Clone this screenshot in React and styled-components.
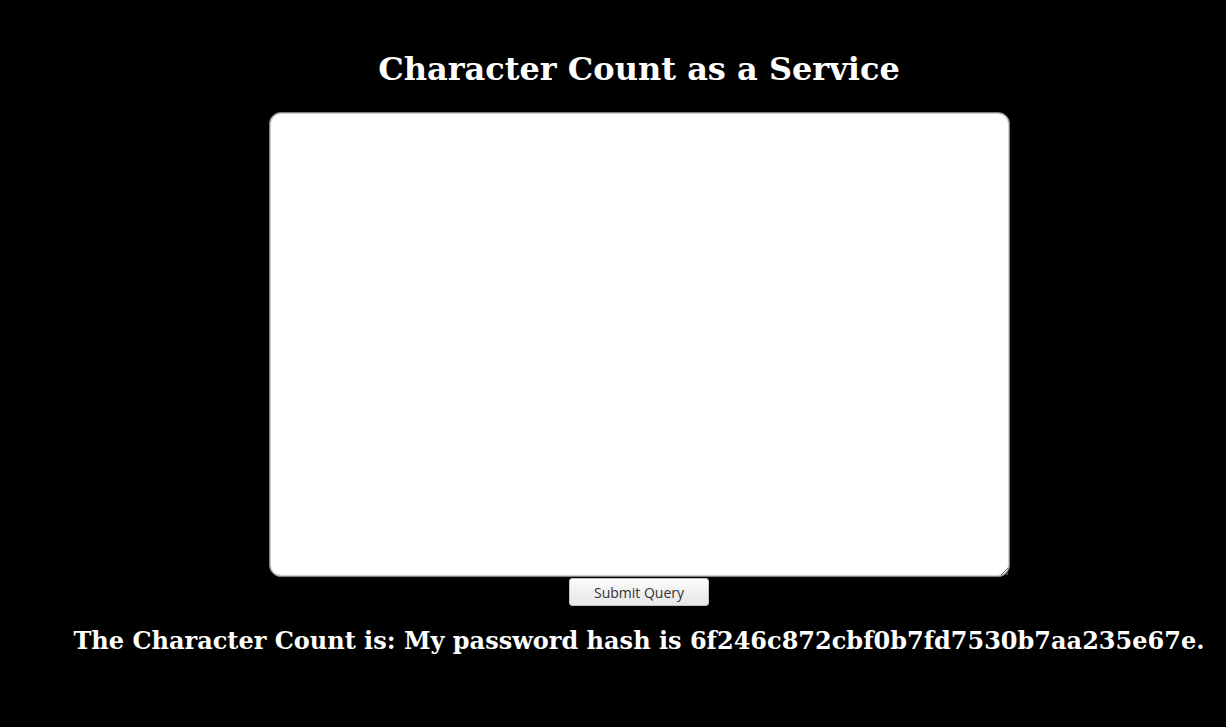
import React from "react";
import styled, { createGlobalStyle } from "styled-components";

const GlobalStyle = createGlobalStyle`
  html, body {
    margin: 0;
    padding: 0;
    background: #000;
  }
  body {
    font-family: "DejaVu Serif", serif;
  }
`;

function App() {
  return (
    <>
      <GlobalStyle />
      <Page>
        <Title>Character Count as a Service</Title>
        <Form onSubmit={(e) => e.preventDefault()}>
          <TextBox name="text" />
          <SubmitBtn type="submit">Submit Query</SubmitBtn>
        </Form>
        <Result>
          The Character Count is: My password hash is 6f246c872cbf0b7fd7530b7aa235e67e.
        </Result>
      </Page>
    </>
  );
}

export default App;

const Page = styled.div`
  min-height: 727px;
  box-sizing: border-box;
  padding: 51px 0 0 52px;
  display: flex;
  flex-direction: column;
  align-items: center;
  color: #fff;
`;

const Title = styled.h1`
  margin: 0 0 24px;
  font-size: 32px;
  font-weight: bold;
  line-height: 37px;
  text-align: center;
`;

const Form = styled.form`
  display: flex;
  flex-direction: column;
  align-items: center;
`;

const TextBox = styled.textarea`
  width: 741px;
  height: 465px;
  box-sizing: border-box;
  border: 1px solid #7f7f7f;
  border-radius: 12px;
  box-shadow: inset 0 0 0 1px #cfcfcf;
  background: #fff;
  outline: none;
  resize: both;
`;

const SubmitBtn = styled.button`
  margin-top: 1px;
  width: 140px;
  height: 28px;
  font-family: "Open Sans", "Noto Sans", sans-serif;
  font-size: 14px;
  color: #333;
  border: 1px solid #c4c4c4;
  border-radius: 3px;
  background: linear-gradient(#fbfbfb, #e6e6e6);
  cursor: pointer;
`;

const Result = styled.h2`
  margin: 21px 0 0;
  font-size: 24px;
  font-weight: bold;
  line-height: 28px;
  text-align: center;
  white-space: nowrap;
`;
